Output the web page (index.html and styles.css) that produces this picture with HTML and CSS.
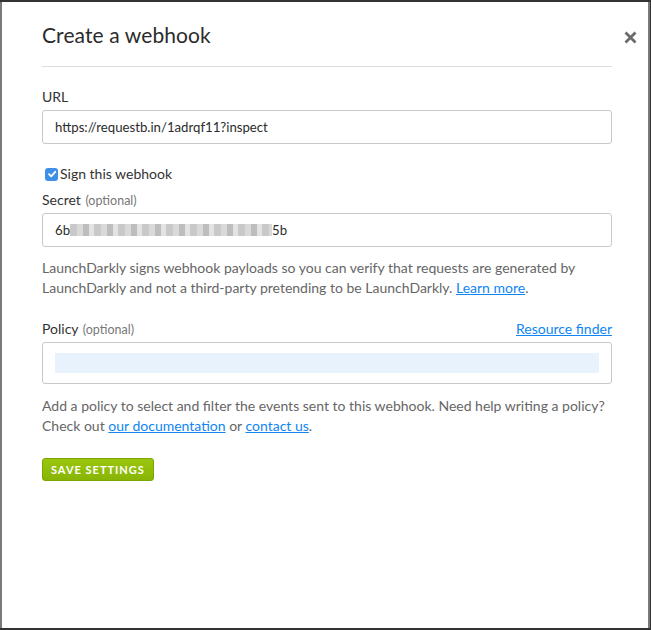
FILE: index.html
```html
<!DOCTYPE html>
<html>
<head>
<meta charset="utf-8">
<link rel="stylesheet" href="styles.css">
</head>
<body>
<div class="backdrop">
  <div class="modal">
    <button class="close" aria-label="Close">
      <svg width="13" height="13" viewBox="0 0 13 13"><path d="M1.5 1.5 L11.5 11.5 M11.5 1.5 L1.5 11.5" stroke="#6b6b6b" stroke-width="2.8" stroke-linecap="butt"/></svg>
    </button>
    <div class="header"><h1 class="title">Create a webhook</h1></div>
    <form class="form">
      <div class="field">
        <label class="label">URL</label>
        <div class="input">https://requestb.in/1adrqf11?inspect</div>
      </div>
      <label class="check">
        <span class="box"><svg width="10" height="10" viewBox="0 0 10 10"><path d="M2 5.2 L4.2 7.4 L8.2 2.8" fill="none" stroke="#fff" stroke-width="1.8" stroke-linecap="round" stroke-linejoin="round"/></svg></span>
        <span>Sign this webhook</span>
      </label>
      <div class="field secret">
        <label class="label">Secret <span class="opt">(optional)</span></label>
        <div class="input"><span>6b</span><span class="blur"></span><span>5b</span></div>
      </div>
      <p class="help"><span class="ln">LaunchDarkly signs webhook payloads so you can verify that requests are generated by</span> <span class="ln">LaunchDarkly and not a third-party pretending to be LaunchDarkly. <a href="#">Learn more</a>.</span></p>
      <div class="field policy">
        <div class="label-row">
          <label class="label">Policy <span class="opt">(optional)</span></label>
          <a href="#" class="small-link">Resource finder</a>
        </div>
        <div class="editor"><div class="line"></div></div>
      </div>
      <p class="help help2"><span class="ln">Add a policy to select and filter the events sent to this webhook. Need help writing a policy?</span> <span class="ln">Check out <a href="#">our documentation</a> or <a href="#">contact us</a>.</span></p>
      <div class="actions"><button type="button" class="save">Save settings</button></div>
    </form>
  </div>
</div>
</body>
</html>
```

FILE: styles.css
```css
* { box-sizing: border-box; }
html, body { margin: 0; padding: 0; }
body {
  background: #333;
  font-family: Lato, "Open Sans", sans-serif;
  color: #333;
}
.backdrop {
  width: 651px;
  height: 630px;
  padding: 2px 3px 2px 2px;
  background: #333;
}
.modal {
  position: relative;
  background: #fff;
  height: 626px;
  padding: 0 36px 0 40px;
  box-shadow: -2px 0 0 #7a7a7a, 2px 0 0 #7a7a7a;
}
.close {
  position: absolute;
  top: 29px;
  right: 11px;
  width: 13px;
  height: 13px;
  padding: 0;
  border: 0;
  background: none;
  display: flex;
}
.header {
  border-bottom: 1px solid #dcdcdc;
  padding-top: 20px;
  height: 65px;
}
.title {
  margin: 0;
  font-size: 21px;
  font-weight: 400;
  line-height: 26px;
  color: #2b2b2b;
  letter-spacing: 0.1px;
}
.form { display: flex; flex-direction: column; padding-top: 20px; }
.field { display: flex; flex-direction: column; }
.label { font-size: 14px; line-height: 20px; color: #333; }
.opt { font-size: 12.5px; color: #777; margin-left: 1px; }
.input {
  margin-top: 3px;
  height: 34px;
  border: 1px solid #c8c8c8;
  border-radius: 3px;
  padding: 0 12px;
  display: flex;
  align-items: center;
  font-size: 13.2px;
  color: #2b2b2b;
}
.blur {
  display: inline-block;
  width: 202px;
  height: 12px;
  background: repeating-linear-gradient(to right, #c9c9c9 0 7px, #dadada 7px 13px, #bdbdbd 13px 19px, #e3e3e3 19px 24px);
}
.check {
  margin-top: 20px;
  display: flex;
  align-items: center;
  gap: 2px;
  font-size: 14px;
  line-height: 20px;
  padding-left: 3px;
}
.box {
  width: 13px;
  height: 13px;
  border-radius: 3px;
  background: #3d8fe8;
  display: flex;
  align-items: center;
  justify-content: center;
}
.secret { margin-top: 6px; }
.secret .input { margin-top: 2px; }
.help {
  margin: 11px 0 0;
  font-size: 14px;
  line-height: 20px;
  color: #666;
}
.help2 { margin-top: 12px; }
.ln { display: block; white-space: nowrap; }
a { color: #0f86f2; text-decoration: underline; }
.policy { margin-top: 21px; }
.label-row { display: flex; justify-content: space-between; align-items: center; height: 20px; }
.small-link { font-size: 14px; line-height: 20px; }
.editor {
  margin-top: 3px;
  height: 42px;
  border: 1px solid #c8c8c8;
  border-radius: 3px;
  padding: 10px 12px;
}
.line { height: 20px; background: #e8f2fd; }
.actions { margin-top: 22px; display: flex; }
.save {
  height: 23px;
  padding: 0 8px;
  border: 1px solid #7aa600;
  border-radius: 3px;
  background: linear-gradient(#9bc50e, #88b505);
  color: #fff;
  font-family: Lato, sans-serif;
  font-weight: 700;
  font-size: 11px;
  letter-spacing: 1px;
  text-transform: uppercase;
}
```
